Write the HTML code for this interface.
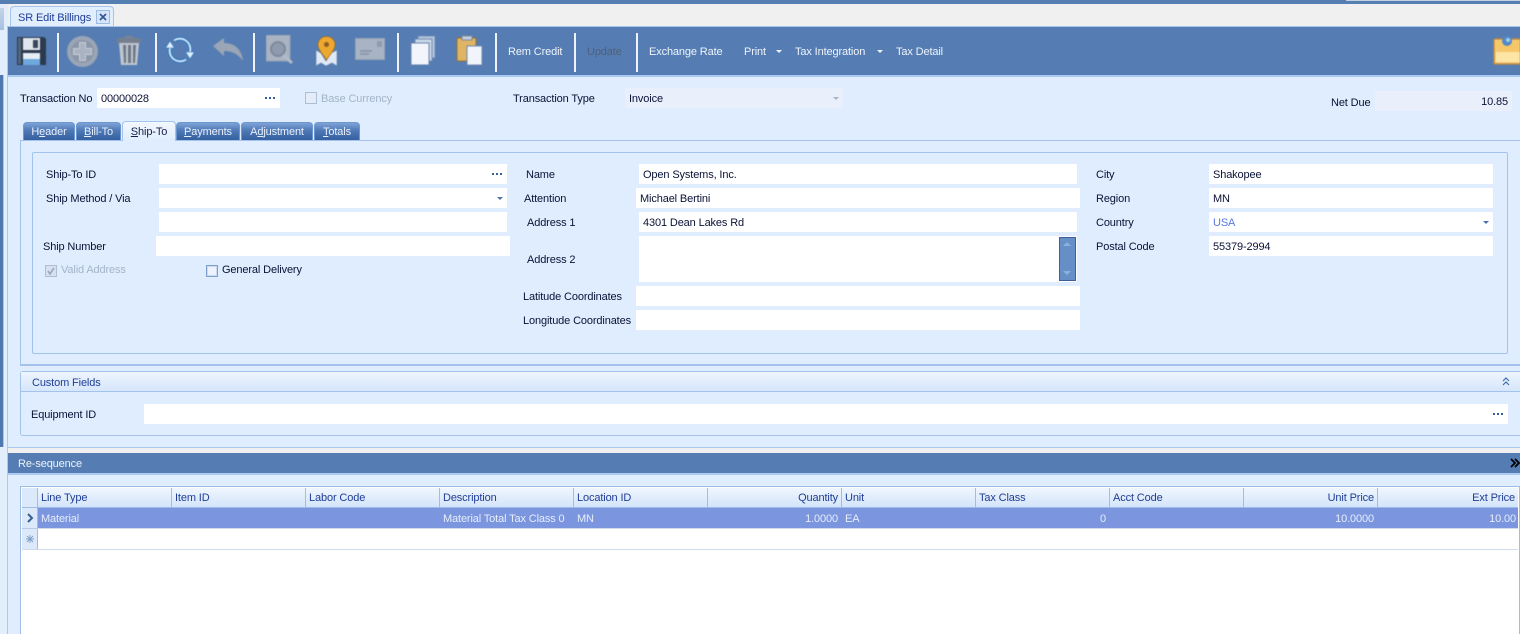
<!DOCTYPE html>
<html><head><meta charset="utf-8"><title>SR Edit Billings</title>
<style>
html,body{margin:0;padding:0;width:1520px;height:634px;overflow:hidden;background:#f0f0f0}
body{position:relative;font:11px/14px "Liberation Sans",sans-serif;color:#0a1236;letter-spacing:-.13px}
div,span,svg{position:absolute;box-sizing:border-box}
u{position:static}
.t{white-space:nowrap;height:14px;margin-top:1px}
.w{color:#eef3fb}
.i{background:#fff;height:20px}
.h{color:#1f3d96}
.ic{filter:blur(.45px)}
.tab{top:122px;height:18px;text-align:center;color:#e8f0fb;line-height:18px;border:1px solid #6d97d0;border-bottom:0;border-radius:4px 4px 0 0;background:linear-gradient(#7da3d6,#4e78b6 45%,#35609f)}
.sep{top:33px;width:2px;height:39px;background:#eef3fa}
.col{top:488px;height:19px;border-right:1px solid #9fbde6;line-height:20px;color:#1f3d96;padding:0 3px;white-space:nowrap}
.cell{top:512px;height:14px;color:#e6edfb;white-space:nowrap}
.dots{width:10px;height:2px;background:repeating-linear-gradient(90deg,#35609f 0 2px,transparent 2px 4px)}
.arr{width:0;height:0;border-left:3px solid transparent;border-right:3px solid transparent;border-top:3px solid #4a72ad}
</style></head>
<body>
<!-- top strip and left edge -->
<div style="left:0;top:0;width:1520px;height:4px;background:#557eb3"></div>
<div style="left:1346px;top:0;width:174px;height:1px;background:#c4cfdf"></div>
<div style="left:0;top:4px;width:8px;height:630px;background:#e3eefd"></div>
<div style="left:0;top:8px;width:4px;height:22px;background:linear-gradient(#c5d3e6,#a8c1e2)"></div>
<div style="left:0;top:75px;width:3px;height:372px;background:#4f78b1"></div>
<div style="left:3px;top:75px;width:1px;height:372px;background:#a8c6ef"></div>
<div style="left:7px;top:26px;width:1px;height:608px;background:#a9c8f0"></div>

<!-- document tab -->
<div style="left:10px;top:6px;width:104px;height:21px;border:1px solid #a5c4ee;border-bottom:0;border-radius:4px 4px 0 0;background:#e1eefe"></div>
<div class="t h" style="left:18px;top:10px;font-size:11px">SR Edit Billings</div>
<div style="left:96px;top:10px;width:14px;height:14px;border:1px solid #9dbbe3;background:#d5e4f8"></div>
<svg style="left:99px;top:13px" width="8" height="8" viewBox="0 0 8 8"><path d="M1 1L7 7M7 1L1 7" stroke="#2f5590" stroke-width="1.6"/></svg>
<div style="left:8px;top:26px;width:1512px;height:1px;background:#a5c4ee"></div>

<!-- toolbar -->
<div style="left:8px;top:27px;width:1512px;height:48px;background:#557db3"></div>
<div class="sep" style="left:57px"></div>
<div class="sep" style="left:155px"></div>
<div class="sep" style="left:253px"></div>
<div class="sep" style="left:397px"></div>
<div class="sep" style="left:495px"></div>
<div class="sep" style="left:574px"></div>
<div class="sep" style="left:636px"></div>

<!-- save -->
<svg class="ic" style="left:15px;top:35px" width="32" height="32" viewBox="0 0 32 32">
<path d="M2 2H29L31 4V30H2Z" fill="#2c3a4e"/><rect x="3" y="3" width="3" height="26" fill="#55657b"/>
<rect x="8" y="3" width="17" height="12" fill="#dfe6f0"/><rect x="18" y="5" width="5" height="8" fill="#3a4657"/>
<rect x="8" y="18" width="17" height="12" fill="#e8eef6"/><rect x="8" y="24" width="17" height="6" fill="#6fa8dc"/>
</svg>
<!-- add -->
<svg class="ic" style="left:66px;top:35px" width="33" height="33" viewBox="0 0 33 33">
<circle cx="16.5" cy="16.5" r="15.5" fill="#9aa5b5"/><circle cx="16.5" cy="16.5" r="11.5" fill="#8b97a9"/>
<path d="M13.5 7.5h6v6h6v6h-6v6h-6v-6h-6v-6h6z" fill="#a9b3c1" stroke="#c5ccd6"/>
</svg>
<!-- trash -->
<svg class="ic" style="left:115px;top:34px" width="28" height="33" viewBox="0 0 28 33">
<path d="M10 2h8v2h-8z" fill="#7d8797"/><path d="M2 4H26V9H2Z" fill="#747f90"/>
<path d="M4 9H24L22 31H6Z" fill="#c0c6cf"/><path d="M8 11h3v18H9zM13 11h3v18h-3zM18 11h3l-1 18h-2z" fill="#6d7888"/>
</svg>
<!-- refresh -->
<svg class="ic" style="left:164px;top:35px" width="33" height="32" viewBox="0 0 33 32" fill="none">
<path d="M6 13A10.5 10.5 0 0 0 22 24.5" stroke="#2a73ba" stroke-width="3.6"/>
<path d="M26 17A10.5 10.5 0 0 0 10 5.5" stroke="#2a73ba" stroke-width="3.6"/>
<path d="M6 13A10.5 10.5 0 0 0 22 24.5" stroke="#d6ebfa" stroke-width="1.8"/>
<path d="M26 17A10.5 10.5 0 0 0 10 5.5" stroke="#d6ebfa" stroke-width="1.8"/>
<path d="M6 6L1.5 13H10.5Z" fill="#dff0fc" stroke="#2a73ba" stroke-width=".6"/>
<path d="M26 24L21.5 17H30.5Z" fill="#dff0fc" stroke="#2a73ba" stroke-width=".6"/>
</svg>
<!-- undo -->
<svg class="ic" style="left:212px;top:37px" width="32" height="25" viewBox="0 0 32 25">
<path d="M1 9L12 1V6C23 6 30 13 31 24C26 17 20 14 12 14V19Z" fill="#9aa5b5"/>
</svg>
<!-- search -->
<svg class="ic" style="left:266px;top:35px" width="28" height="30" viewBox="0 0 28 30">
<rect x="0" y="0" width="24" height="26" fill="#a9b3c2" stroke="#97a2b2"/>
<circle cx="12" cy="14" r="7" fill="#8e9aad" stroke="#7e8a9c" stroke-width="2"/>
<path d="M17 20L26 28" stroke="#b1bac7" stroke-width="3"/>
</svg>
<!-- pin -->
<svg class="ic" style="left:315px;top:36px" width="23" height="31" viewBox="0 0 23 31">
<path d="M1 14L6 17L11 25L16 17L22 14V30L17 27L11 30L6 27L1 30Z" fill="#dfe9f5" stroke="#5c7ea8" stroke-width=".6"/>
<path d="M11.5 24C8 18 3 14 3 8.5A8.5 8 0 0 1 20 8.5C20 14 15 18 11.5 24Z" fill="#eda92f" stroke="#a8681a" stroke-width=".7"/>
<circle cx="11.5" cy="8.5" r="2.5" fill="#8b5c26"/>
</svg>
<!-- card -->
<svg class="ic" style="left:355px;top:38px" width="31" height="23" viewBox="0 0 31 23">
<rect x=".5" y=".5" width="29" height="21" fill="#a8b3c3" stroke="#97a3b5"/>
<rect x="22" y="3" width="5" height="6" fill="#8f9cae"/><path d="M5 13H17M5 16H14" stroke="#8593a7" stroke-width="1.4"/>
</svg>
<!-- copy -->
<svg class="ic" style="left:410px;top:35px" width="27" height="30" viewBox="0 0 27 30">
<rect x="8" y="1" width="17" height="22" fill="#b8c8e0" stroke="#6f89b2"/>
<rect x="5" y="4" width="17" height="22" fill="#cad7ea" stroke="#6f89b2"/>
<rect x="1" y="8" width="18" height="22" fill="#f2f5fb" stroke="#6b83aa"/>
</svg>
<!-- paste -->
<svg class="ic" style="left:456px;top:35px" width="28" height="31" viewBox="0 0 28 31">
<rect x="1" y="3" width="19" height="23" rx="1" fill="#e0b465" stroke="#9a6e2c"/>
<rect x="6" y="1" width="10" height="4" fill="#c5cfdc" stroke="#7f8b9b"/>
<rect x="11" y="11" width="15" height="19" fill="#f1f4fa" stroke="#7089b0"/>
</svg>

<div class="t w" style="left:508px;top:44px">Rem Credit</div>
<div class="t" style="left:587px;top:44px;color:#4f6079">Update</div>
<div class="t w" style="left:649px;top:44px">Exchange Rate</div>
<div class="t w" style="left:744px;top:44px">Print</div>
<div class="arr" style="left:776px;top:50px;border-top-color:#eef3fb"></div>
<div class="t w" style="left:795px;top:44px">Tax Integration</div>
<div class="arr" style="left:877px;top:50px;border-top-color:#eef3fb"></div>
<div class="t w" style="left:896px;top:44px">Tax Detail</div>
<!-- note -->
<svg class="ic" style="left:1493px;top:36px" width="27" height="29" viewBox="0 0 27 29">
<rect x="1" y="3" width="27" height="25" rx="1" fill="#f8cf78" stroke="#b98843" stroke-width="1.5"/>
<rect x="3" y="5" width="24" height="11" fill="#f6c768"/><rect x="3" y="16" width="24" height="10" fill="#fde5a6"/>
<circle cx="14" cy="5" r="5" fill="#4f8ac8"/><circle cx="15" cy="4" r="2" fill="#a7cdf0"/>
</svg>

<!-- main panel -->
<div style="left:8px;top:75px;width:1512px;height:373px;background:#e0edfe;border-top:2px solid #a9c9f0;border-bottom:1px solid #a9c9f0"></div>

<div class="t" style="left:20px;top:91px">Transaction No</div>
<div class="i" style="left:97px;top:88px;width:183px"></div>
<div class="t" style="left:101px;top:91px">00000028</div>
<div class="dots" style="left:265px;top:97px"></div>
<div style="left:305px;top:92px;width:12px;height:12px;border:1px solid #aebed4;background:#e3ecf8"></div>
<div class="t" style="left:321px;top:91px;color:#a4b4ca">Base Currency</div>
<div class="t" style="left:513px;top:91px">Transaction Type</div>
<div class="i" style="left:625px;top:88px;width:218px;background:#eaf0fb"></div>
<div class="t" style="left:629px;top:91px">Invoice</div>
<div class="arr" style="left:833px;top:97px;border-top-color:#a6b4c8"></div>
<div class="t" style="left:1331px;top:95px">Net Due</div>
<div class="i" style="left:1375px;top:91px;width:137px;background:#eaf0fb"></div>
<div class="t" style="left:1400px;width:108px;top:94px;text-align:right">10.85</div>

<!-- tab page -->
<div style="left:20px;top:140px;width:1500px;height:226px;border:1px solid #a3c3ec;border-right:0;border-bottom:2px solid #a3c3ec;background:#e0edfe"></div>
<div class="tab" style="left:23px;width:52px">H<u>e</u>ader</div>
<div class="tab" style="left:76px;width:45px"><u>B</u>ill-To</div>
<div class="tab" style="left:122px;top:121px;height:20px;width:54px;color:#14204a;background:linear-gradient(#f3f8ff,#e0edfe);border-color:#a3c3ec;line-height:20px"><u>S</u>hip-To</div>
<div class="tab" style="left:176px;width:64px"><u>P</u>ayments</div>
<div class="tab" style="left:241px;width:72px">A<u>d</u>justment</div>
<div class="tab" style="left:314px;width:46px"><u>T</u>otals</div>

<div style="left:32px;top:152px;width:1476px;height:202px;border:1px solid #a3c3ec;border-radius:2px"></div>

<!-- left column -->
<div class="t" style="left:46px;top:167px">Ship-To ID</div>
<div class="i" style="left:159px;top:164px;width:348px"></div>
<div class="dots" style="left:492px;top:173px"></div>
<div class="t" style="left:46px;top:191px">Ship Method / Via</div>
<div class="i" style="left:159px;top:188px;width:348px"></div>
<div class="arr" style="left:497px;top:197px"></div>
<div class="i" style="left:159px;top:212px;width:348px"></div>
<div class="t" style="left:43px;top:239px">Ship Number</div>
<div class="i" style="left:156px;top:236px;width:354px"></div>
<div style="left:45px;top:265px;width:12px;height:12px;border:1px solid #aebed4;background:#d6e0ee"></div>
<svg style="left:47px;top:267px" width="8" height="8" viewBox="0 0 8 8"><path d="M1 4L3 7L7 1" fill="none" stroke="#9aa9bf" stroke-width="1.6"/></svg>
<div class="t" style="left:61px;top:262px;color:#a4b4ca">Valid Address</div>
<div style="left:206px;top:265px;width:12px;height:12px;border:1px solid #7d9fd2;background:#eef3fb;box-shadow:inset 0 0 0 1px #c9d9f0"></div>
<div class="t" style="left:222px;top:262px">General Delivery</div>

<!-- middle column -->
<div class="t" style="left:526px;top:167px">Name</div>
<div class="i" style="left:639px;top:164px;width:438px"></div>
<div class="t" style="left:643px;top:167px">Open Systems, Inc.</div>
<div class="t" style="left:524px;top:191px">Attention</div>
<div class="i" style="left:636px;top:188px;width:444px"></div>
<div class="t" style="left:640px;top:191px">Michael Bertini</div>
<div class="t" style="left:527px;top:215px">Address 1</div>
<div class="i" style="left:639px;top:212px;width:438px"></div>
<div class="t" style="left:643px;top:215px">4301 Dean Lakes Rd</div>
<div class="t" style="left:527px;top:252px">Address 2</div>
<div class="i" style="left:639px;top:236px;width:438px;height:46px"></div>
<div style="left:1059px;top:237px;width:17px;height:44px;background:#668fc8;border:1px solid #3b5f98"></div>
<div class="arr" style="left:1063px;top:242px;border-left-width:4px;border-right-width:4px;border-top:0;border-bottom:4px solid #8eb0dc"></div>
<div class="arr" style="left:1063px;top:271px;border-left-width:4px;border-right-width:4px;border-top:4px solid #8eb0dc"></div>
<div class="t" style="left:523px;top:289px">Latitude Coordinates</div>
<div class="i" style="left:636px;top:286px;width:444px"></div>
<div class="t" style="left:523px;top:313px">Longitude Coordinates</div>
<div class="i" style="left:636px;top:310px;width:444px"></div>

<!-- right column -->
<div class="t" style="left:1096px;top:167px">City</div>
<div class="i" style="left:1209px;top:164px;width:284px"></div>
<div class="t" style="left:1213px;top:167px">Shakopee</div>
<div class="t" style="left:1096px;top:191px">Region</div>
<div class="i" style="left:1209px;top:188px;width:284px"></div>
<div class="t" style="left:1213px;top:191px">MN</div>
<div class="t" style="left:1096px;top:215px">Country</div>
<div class="i" style="left:1209px;top:212px;width:284px"></div>
<div class="t" style="left:1213px;top:215px;color:#5a78e0">USA</div>
<div class="arr" style="left:1483px;top:221px"></div>
<div class="t" style="left:1096px;top:239px">Postal Code</div>
<div class="i" style="left:1209px;top:236px;width:284px"></div>
<div class="t" style="left:1213px;top:239px">55379-2994</div>

<!-- custom fields -->
<div style="left:20px;top:371px;width:1500px;height:65px;border:1px solid #a3c3ec;border-right:0;border-radius:3px 0 0 3px;background:#e0edfe"></div>
<div style="left:21px;top:372px;width:1499px;height:20px;background:linear-gradient(#eef5fe,#d6e6fb);border-bottom:1px solid #a3c3ec"></div>
<div class="t h" style="left:32px;top:375px">Custom Fields</div>
<svg style="left:1502px;top:377px" width="8" height="9" viewBox="0 0 8 9"><path d="M1 4L4 1L7 4M1 8L4 5L7 8" fill="none" stroke="#3f6ea8" stroke-width="1.2"/></svg>
<div class="t" style="left:31px;top:407px">Equipment ID</div>
<div class="i" style="left:144px;top:404px;width:1364px"></div>
<div class="dots" style="left:1493px;top:413px"></div>

<!-- resequence -->
<div style="left:8px;top:448px;width:1512px;height:5px;background:#f0f0f0"></div>
<div style="left:8px;top:453px;width:1512px;height:20px;background:#557db3"></div>
<div class="t w" style="left:18px;top:456px">Re-sequence</div>
<svg style="left:1510px;top:458px" width="10" height="10" viewBox="0 0 10 10"><path d="M1 1L5 5L1 9M5 1L9 5L5 9" fill="none" stroke="#000" stroke-width="1.8"/></svg>
<div style="left:8px;top:473px;width:1512px;height:161px;background:#e0edfe;border-top:2px solid #a9c9f0"></div>

<!-- grid -->
<div style="left:20px;top:486px;width:1500px;height:148px;background:#fff;border:1px solid #9dbce6;border-bottom:0"></div>
<div style="left:22px;top:488px;width:1496px;height:20px;background:linear-gradient(#f0f6fe,#d3e4fa);border-bottom:1px solid #9dbce6"></div>
<div class="col" style="left:22px;width:16px;background:#dce9fa"></div>
<div class="col" style="left:38px;width:134px">Line Type</div>
<div class="col" style="left:172px;width:134px">Item ID</div>
<div class="col" style="left:306px;width:134px">Labor Code</div>
<div class="col" style="left:440px;width:134px">Description</div>
<div class="col" style="left:574px;width:134px">Location ID</div>
<div class="col" style="left:708px;width:134px;text-align:right">Quantity</div>
<div class="col" style="left:842px;width:134px">Unit</div>
<div class="col" style="left:976px;width:134px">Tax Class</div>
<div class="col" style="left:1110px;width:134px">Acct Code</div>
<div class="col" style="left:1244px;width:134px;text-align:right">Unit Price</div>
<div class="col" style="left:1378px;width:140px;text-align:right;border-right:0">Ext Price</div>

<div style="left:22px;top:508px;width:16px;height:42px;background:#dce9fa;border-right:1px solid #9dbce6"></div>
<div style="left:22px;top:528px;width:16px;height:1px;background:#b5cbe6"></div>
<div style="left:22px;top:549px;width:1496px;height:1px;background:#cfdcec"></div>
<div style="left:38px;top:508px;width:1480px;height:20px;background:#7b96de"></div>
<div style="left:38px;top:528px;width:1480px;height:1px;background:#cfdcec"></div>
<svg style="left:27px;top:513px" width="7" height="10" viewBox="0 0 7 10"><path d="M1 1L5 5L1 9" fill="none" stroke="#3c5f92" stroke-width="2"/></svg>
<svg style="left:26px;top:535px" width="8" height="8" viewBox="0 0 8 8"><path d="M4 0V8M0 4H8M1 1L7 7M7 1L1 7" stroke="#7f9fc9" stroke-width=".9"/></svg>

<div class="cell" style="left:41px">Material</div>
<div class="cell" style="left:443px">Material Total Tax Class 0</div>
<div class="cell" style="left:577px">MN</div>
<div class="cell" style="left:738px;width:100px;text-align:right">1.0000</div>
<div class="cell" style="left:845px">EA</div>
<div class="cell" style="left:1006px;width:100px;text-align:right">0</div>
<div class="cell" style="left:1274px;width:100px;text-align:right">10.0000</div>
<div class="cell" style="left:1416px;width:100px;text-align:right">10.00</div>
</body></html>
